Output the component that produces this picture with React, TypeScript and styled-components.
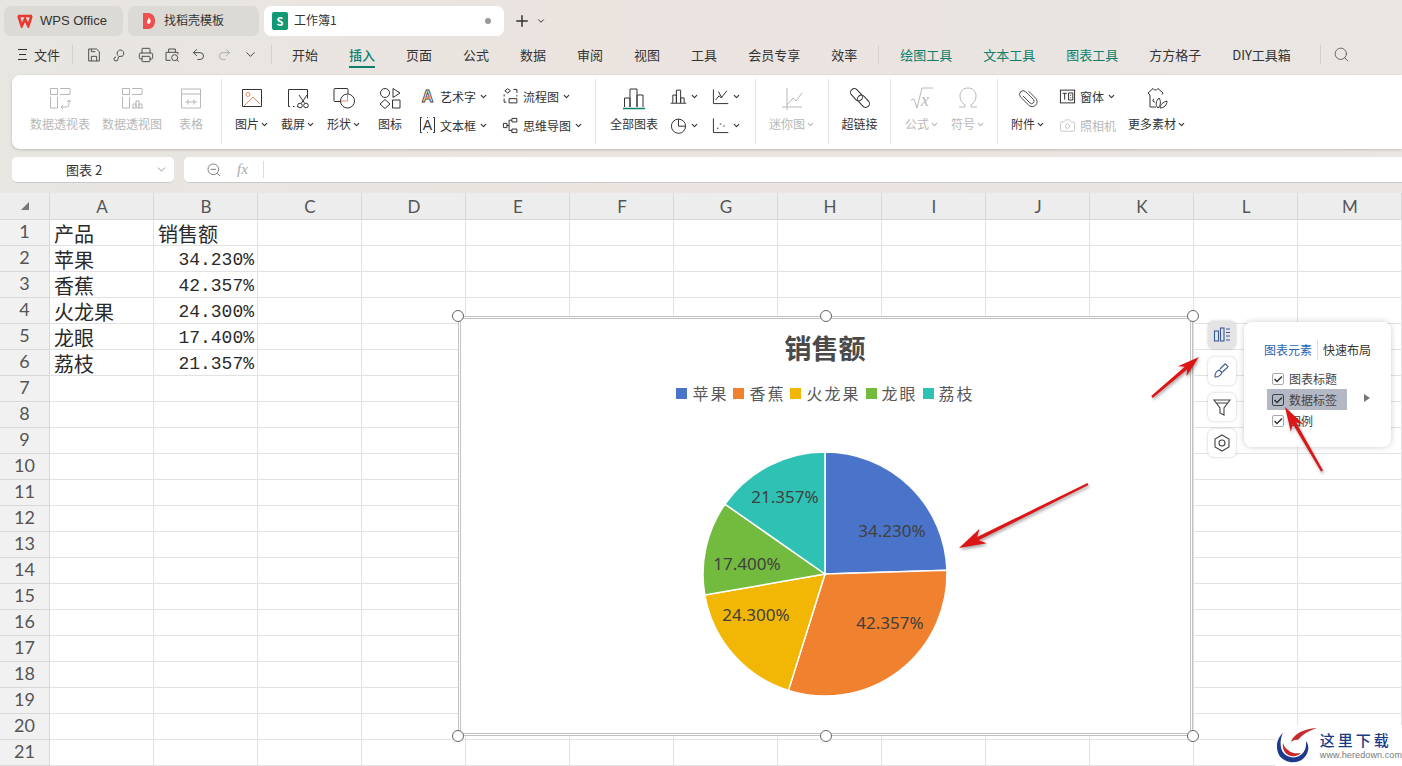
import { FC, ReactNode } from 'react';
import styled, { createGlobalStyle } from 'styled-components';
import { Camera, ChevronDown, Plus, Printer, Redo2, Search, Undo2 } from 'lucide-react';

const UI_FONT = '"Noto Sans CJK SC", "Noto Sans", sans-serif';
const GREEN = '#0e7f6a';
const COLUMNS = ['A', 'B', 'C', 'D', 'E', 'F', 'G', 'H', 'I', 'J', 'K', 'L', 'M'];
const ROW_COUNT = 21;

const GlobalStyle = createGlobalStyle`
  html, body {
    margin: 0;
    padding: 0;
    overflow: hidden;
    background: #f1f1f1;
    font-family: ${UI_FONT};
  }
`;

const SPage = styled.div`
  position: relative;
  width: 1402px;
  height: 766px;
  overflow: hidden;
  display: flex;
  flex-direction: column;
`;
const STop = styled.div`
  background: linear-gradient(90deg, #e8e6e1 0%, #ebe3df 50%, #e9e6e3 100%);
  height: 193px;
  box-sizing: border-box;
`;

/* tabs */
const STabBar = styled.div`
  height: 36px;
  box-sizing: border-box;
  padding: 6px 0 0 4px;
  display: flex;
  gap: 5px;
  align-items: stretch;
`;
const STab = styled.div<{ $width: number; $pad: number; $gap: number; $active?: boolean }>`
  width: ${({ $width }) => $width}px;
  box-sizing: border-box;
  display: flex;
  align-items: center;
  gap: ${({ $gap }) => $gap}px;
  padding: 0 13px 0 ${({ $pad }) => $pad}px;
  border-radius: 7px;
  font-size: 12px;
  color: #333;
  background: ${({ $active }) => ($active ? '#ffffff' : '#dcdad5')};
`;
const STabText = styled.span`
  margin-top: -2px;
  line-height: 16px;
`;
const SOfficeText = styled(STabText)`
  font: 13px 'Liberation Sans', sans-serif;
  margin-top: -1px;
`;
const SSheetBadge = styled.span`
  width: 16px;
  height: 18px;
  border-radius: 2px;
  background: #0f9a75;
  color: #fff;
  font-size: 11px;
  font-weight: 700;
  display: flex;
  align-items: center;
  justify-content: center;
`;
const STabDot = styled.span`
  margin-left: auto;
  width: 6px;
  height: 6px;
  border-radius: 50%;
  background: #9a9a9a;
`;
const SNewTab = styled.div`
  display: flex;
  align-items: center;
  gap: 5px;
  margin-left: 4px;
  color: #333;
`;

/* menu row */
const SMenuRow = styled.div`
  height: 39px;
  box-sizing: border-box;
  padding: 0 0 2px 18px;
  display: flex;
  align-items: center;
  font-size: 13px;
  color: #333;
`;
const SFileButton = styled.div`
  width: 53px;
  display: flex;
  align-items: center;
  gap: 7px;
`;
const SMenuLines = styled.span`
  width: 9px;
  height: 9px;
  border-top: 1px solid #333;
  border-bottom: 1px solid #333;
  position: relative;
  &::after {
    content: '';
    position: absolute;
    left: 1px;
    right: 1px;
    top: 4px;
    height: 1px;
    background: #333;
  }
`;
const SMenuSep = styled.span<{ $margin: number; $right: number }>`
  width: 1px;
  height: 19px;
  background: #d4d1cd;
  margin: 0 ${({ $right }) => $right}px 0 ${({ $margin }) => $margin}px;
`;
const SQuickButton = styled.span<{ $faded?: boolean }>`
  width: 26px;
  display: flex;
  justify-content: center;
  color: ${({ $faded }) => ($faded ? '#aaa' : '#444')};
`;
const SMenuTabs = styled.div`
  display: flex;
  gap: 31px;
`;
const SMenuTab = styled.span<{ $active?: boolean; $tool?: boolean }>`
  position: relative;
  white-space: nowrap;
  line-height: 20px;
  color: ${({ $active, $tool }) => ($active || $tool ? GREEN : '#333')};
  font-weight: ${({ $active }) => ($active ? 500 : 400)};
  ${({ $active }) =>
    $active &&
    `&::after {
      content: '';
      position: absolute;
      left: 0;
      right: 0;
      bottom: -3px;
      height: 2px;
      background: ${GREEN};
    }`}
`;

/* ribbon */
const SRibbon = styled.div`
  height: 74px;
  margin-left: 12px;
  background: #fff;
  border-radius: 8px 0 0 8px;
  box-shadow: 0 1px 3px rgba(0, 0, 0, 0.18);
  display: flex;
  box-sizing: border-box;
  padding: 4px 0 5px;
`;
const SGroup = styled.div<{ $width?: number; $pad?: number; $noSep?: boolean }>`
  ${({ $width }) => $width && `width: ${$width}px;`}
  box-sizing: border-box;
  padding-left: ${({ $pad }) => $pad ?? 0}px;
  display: flex;
  ${({ $noSep }) => !$noSep && 'border-right: 1px solid #e2e2e2;'}
`;
const SBigButton = styled.div<{ $width: number; $disabled?: boolean }>`
  width: ${({ $width }) => $width}px;
  display: flex;
  flex-direction: column;
  align-items: center;
  padding-top: 7px;
  color: ${({ $disabled }) => ($disabled ? '#b8b8b8' : '#333')};
`;
const SIconBox = styled.div`
  height: 24px;
  display: flex;
  align-items: center;
  justify-content: center;
`;
const SBigLabel = styled.div`
  margin-top: 6px;
  line-height: 16px;
  font-size: 12px;
  white-space: nowrap;
  display: flex;
  align-items: center;
  gap: 2px;
`;
const SSmallColumn = styled.div<{ $width: number; $left?: number }>`
  width: ${({ $width }) => $width}px;
  margin-left: ${({ $left }) => $left ?? 0}px;
  padding-top: 4px;
  display: flex;
  flex-direction: column;
  gap: 3px;
`;
const SSmallRow = styled.div<{ $disabled?: boolean }>`
  height: 26px;
  display: flex;
  align-items: center;
  gap: 4px;
  font-size: 12px;
  white-space: nowrap;
  color: ${({ $disabled }) => ($disabled ? '#b8b8b8' : '#333')};
`;
const SCaret = styled(ChevronDown)`
  flex: none;
  width: 9px;
  height: 9px;
  stroke-width: 3;
  margin-left: -1px;
`;

/* formula bar */
const SFormulaRow = styled.div`
  margin-top: 8px;
  height: 26px;
  display: flex;
  gap: 10px;
  padding-left: 12px;
`;
const SNameBox = styled.div`
  width: 162px;
  box-sizing: border-box;
  background: #fff;
  border-radius: 5px;
  border-bottom: 1px solid #c9c9c9;
  display: flex;
  align-items: center;
  font-size: 13px;
  color: #333;
  padding: 0 6px 0 54px;
  justify-content: space-between;
`;
const SFormulaBox = styled.div`
  flex: 1;
  box-sizing: border-box;
  background: #fff;
  border-radius: 5px 0 0 5px;
  border-bottom: 1px solid #c9c9c9;
  display: flex;
  align-items: center;
  padding-left: 22px;
  color: #777;
`;
const SFx = styled.span`
  font-family: 'Liberation Serif', serif;
  font-style: italic;
  font-size: 15px;
  color: #aaa;
  margin-left: 15px;
  padding-right: 15px;
  border-right: 1px solid #ddd;
  line-height: 17px;
`;

/* sheet */
const SSheet = styled.div`
  display: grid;
  grid-template-columns: 50px repeat(13, 104px);
  grid-template-rows: 27px repeat(${ROW_COUNT}, 26px);
  background: #fff;
`;
const SCorner = styled.div`
  background: #ededed;
  border-right: 1px solid #d8d8d8;
  border-bottom: 1px solid #d8d8d8;
  display: flex;
  align-items: center;
  justify-content: center;
  padding-left: 1px;
  &::before {
    content: '';
    border-left: 8px solid transparent;
    border-bottom: 8px solid #777;
  }
`;
const SColHeader = styled.div`
  background: #ededed;
  border-right: 1px solid #d8d8d8;
  border-bottom: 1px solid #d8d8d8;
  display: flex;
  align-items: center;
  justify-content: center;
  padding-left: 1px;
  font: 17px Lato, sans-serif;
  color: #555;
`;
const SRowHeader = styled(SColHeader)`
  font-size: 18px;
  background: #f1f1f1;
  padding: 0 0 3px;
`;
const SCell = styled.div<{ $align?: 'right' }>`
  box-sizing: border-box;
  border-right: 1px solid #e2e2e2;
  border-bottom: 1px solid #e2e2e2;
  font-size: 20px;
  line-height: 24px;
  white-space: nowrap;
  color: #2a2a2a;
  padding: 2px 3px 0 4px;
  text-align: ${({ $align }) => $align ?? 'left'};
  font-family: ${({ $align }) => ($align ? '"Liberation Mono", monospace' : UI_FONT)};
  ${({ $align }) => $align && 'font-size: 18px;'}
`;

/* chart */
const SChart = styled.div`
  position: absolute;
  left: 458px;
  top: 316px;
  width: 735px;
  height: 420px;
  box-sizing: border-box;
  border: 3px double #c2c2c2;
  background: #fff;
  display: flex;
  flex-direction: column;
  align-items: center;
`;
const SChartTitle = styled.div`
  margin: 11px 1px 0 0;
  line-height: 36px;
  font-size: 27px;
  font-weight: 700;
  color: #4a4a4a;
`;
const SLegend = styled.div`
  margin-top: 18px;
  height: 18px;
  display: flex;
  gap: 5px;
  font-size: 16px;
  line-height: 18px;
  letter-spacing: 2px;
  color: #595959;
`;
const SLegendItem = styled.div`
  display: flex;
  align-items: center;
  gap: 5px;
`;
const SLegendSwatch = styled.span<{ $color: string }>`
  width: 11px;
  height: 11px;
  background: ${({ $color }) => $color};
`;
const SPie = styled.svg`
  margin: 42px 1px 0 0;
  display: block;
`;
const SHandleLayer = styled.div`
  position: absolute;
  inset: -3px;
  pointer-events: none;
`;
const SHandle = styled.span<{ $x: number; $y: number }>`
  position: absolute;
  left: ${({ $x }) => $x}%;
  top: ${({ $y }) => $y}%;
  width: 12px;
  height: 12px;
  box-sizing: border-box;
  margin: -6px 0 0 -6px;
  border-radius: 50%;
  background: #fff;
  border: 1px solid #666;
`;

/* chart side tools */
const SSideTools = styled.div`
  position: absolute;
  left: 1208px;
  top: 321px;
  display: flex;
  flex-direction: column;
  gap: 8px;
`;
const SSideButton = styled.div<{ $active?: boolean }>`
  width: 28px;
  height: 28px;
  border-radius: 6px;
  background: ${({ $active }) => ($active ? '#e4e4e4' : '#fff')};
  box-shadow: 0 0 3px rgba(0, 0, 0, 0.22);
  display: flex;
  align-items: center;
  justify-content: center;
`;
const SPopover = styled.div`
  position: absolute;
  left: 1244px;
  top: 322px;
  width: 147px;
  height: 125px;
  box-sizing: border-box;
  padding: 18px 0 0 20px;
  border-radius: 8px;
  background: #fff;
  box-shadow: 0 0 6px rgba(0, 0, 0, 0.2);
  font-size: 12px;
  color: #444;
`;
const SPopTabs = styled.div`
  display: flex;
  line-height: 20px;
  margin-bottom: 8px;
`;
const SPopTab = styled.span<{ $active?: boolean }>`
  color: ${({ $active }) => ($active ? '#2a62b5' : '#333')};
  ${({ $active }) => $active && 'padding-right: 5px; border-right: 1px solid #ddd; margin-right: 5px;'}
`;
const SPopRow = styled.div<{ $active?: boolean }>`
  width: 80px;
  height: 21px;
  margin-left: 3px;
  padding-left: 5px;
  box-sizing: border-box;
  display: flex;
  align-items: center;
  gap: 5px;
  background: ${({ $active }) => ($active ? '#b4b8c4' : 'transparent')};
`;
const SCheck = styled.span<{ $active?: boolean }>`
  width: 12px;
  height: 12px;
  box-sizing: border-box;
  border: 1px solid ${({ $active }) => ($active ? '#3b4252' : '#aaa')};
  border-radius: 2px;
  background: ${({ $active }) => ($active ? 'transparent' : '#fff')};
  display: flex;
  align-items: center;
  justify-content: center;
`;
const SPopArrow = styled.span`
  position: absolute;
  left: 120px;
  top: 72px;
  border-left: 6px solid #777;
  border-top: 4px solid transparent;
  border-bottom: 4px solid transparent;
`;

/* annotations */
const SArrowLayer = styled.svg`
  position: absolute;
  left: 0;
  top: 0;
  pointer-events: none;
  filter: drop-shadow(1px 2px 1.5px rgba(0, 0, 0, 0.35));
`;
const SWatermark = styled.div`
  position: absolute;
  left: 1275px;
  top: 725px;
  width: 127px;
  height: 41px;
  background: #fff;
  display: flex;
  gap: 3px;
`;
const SWatermarkText = styled.div`
  display: flex;
  flex-direction: column;
  padding-top: 5px;
`;
const SWatermarkTitle = styled.div`
  font-size: 15px;
  line-height: 20px;
  font-weight: 500;
  letter-spacing: 3px;
  color: #1c3a86;
`;
const SWatermarkUrl = styled.div`
  font: 9px 'Liberation Sans', sans-serif;
  color: #777;
  letter-spacing: 0.1px;
`;

/* drawings */
const Ico: FC<{ size?: number; children: ReactNode; color?: string }> = ({ size = 24, children, color }) => (
  <svg
    width={size}
    height={size}
    viewBox="0 0 24 24"
    fill="none"
    stroke={color ?? 'currentColor'}
    strokeWidth={size > 20 ? 1 : 1.4}
  >
    {children}
  </svg>
);
const ORANGE = '#e58a5f';

const icons: Record<string, ReactNode> = {
  pivot: (
    <>
      <rect x="2.500" y="2.500" width="7" height="6" />
      <path d="M12 2.500h10v6H12M2.500 11v11h7V11M13 21h5a3 3 0 0 0 3-3v-4M19 16l2-2 2 2M15 19l-2 2 2 2" />
    </>
  ),
  pivotChart: (
    <>
      <rect x="2.500" y="2.500" width="7" height="6" />
      <path d="M12 2.500h10v6H12M2.500 11v11h7V11M12 22h11M13 22v-4h3v4M16 22v-7h3v7M19 22v-4h3v4" />
    </>
  ),
  table: <path d="M2.500 3h19v19h-19zM2.500 8h19M6 16h6M9 13.500v5M12 16h6M15 13.500v5" />,
  picture: (
    <>
      <path d="M2.500 3.500h19v17h-19z" stroke="#333" />
      <circle cx="8" cy="8.500" r="2" stroke={ORANGE} />
      <path d="M4 20l9-9 7 7" stroke={ORANGE} />
    </>
  ),
  screenshot: (
    <>
      <path d="M4 20.500H2.500v-17h19v9M7 20.500h1.500M11 20.500h1" stroke="#333" />
      <path d="M13 9l5.500 8M21 9l-5.500 8" stroke="#333" />
      <circle cx="14" cy="19.500" r="2.300" stroke="#333" />
      <circle cx="20" cy="19.500" r="2.300" stroke="#333" />
    </>
  ),
  shape: (
    <>
      <path d="M8.500 15.500H3a1 1 0 0 1-1-1V3.500a1 1 0 0 1 1-1h12a1 1 0 0 1 1 1V8" stroke="#333" />
      <circle cx="15.500" cy="15" r="7" stroke="#333" />
      <path d="M9 15h6.500V8.500" stroke={ORANGE} />
    </>
  ),
  iconSet: (
    <>
      <circle cx="7" cy="7" r="4.500" />
      <path d="M15 2.500l7 4.500-7 4.500zM7 13.500l5 4.500-5 4.500L2 18zM14.500 14h7.500v8h-7.500z" />
    </>
  ),
  allCharts: (
    <>
      <path d="M2.500 21v-9h5.500v9M8 21V3h7v18M15 21v-12h6v12" stroke="#333" />
      <path d="M1 22.500h22" stroke={GREEN} strokeWidth="1.500" />
    </>
  ),
  flow: <path d="M8 1l4 3-4 3-4-3zM3 9v3M3 15v5h3M16 2h5v5M21 10v2M10 15h11v6H10z" />,
  mindmap: <path d="M2 9h5v6H2zM14 2h7v5h-7zM14 17h7v5h-7zM7 12h3V4.500h4M10 12v7h4" />,
  bar: <path d="M4 21V10h5v11M9 21V3h6v18M15 21v-7h5v7M1 21.500h22" />,
  line: <path d="M2 2v20h21M5 17l5-6 3 3 8-10M9 5l5 9" />,
  pie: (
    <>
      <circle cx="12" cy="13" r="10" />
      <path d="M12 3v10h10" />
    </>
  ),
  scatter: (
    <>
      <path d="M2 2v20h21" />
      <path d="M8 15v1.500M12 9v1.500M17 12v1.500" strokeWidth="2" />
    </>
  ),
  spark: <path d="M2 21h20M7 2v22M7 19l6-7 3 3 6-8" />,
  sqrt: (
    <>
      <path d="M1 14l3-1 3 9 5-20h11" />
      <text x="11" y="20" fontSize="18" fontStyle="italic" fontFamily="Liberation Serif" stroke="none" fill="currentColor">
        x
      </text>
    </>
  ),
  omega: <path d="M3 21h6v-2c-3-2-5-5-5-9 0-5 3.500-8 8-8s8 3 8 8c0 4-2 7-5 9v2h6" />,
  link: (
    <>
      <rect x="1.500" y="5" width="14" height="7.500" rx="3.750" transform="rotate(48 8.500 8.750)" />
      <rect x="8.500" y="11.500" width="14" height="7.500" rx="3.750" transform="rotate(48 15.500 15.250)" />
    </>
  ),
  clip: (
    <g transform="rotate(-45 12 12) translate(2.500 2) scale(.82)">
      <path d="M9 6v12a3 3 0 0 0 6 0V5a4.500 4.500 0 0 0-9 0v14a6 6 0 0 0 12 0V7" />
    </g>
  ),
  form: (
    <>
      <rect x="2" y="3" width="20" height="18" />
      <path d="M5 7.500h6M8 7.500v9M13.500 7h6v10h-6zM16.500 9.500v1.500M16.500 13v1.500" />
    </>
  ),
  material: (
    <>
      <path d="M11 21H5V9L3 7l5-4.500c1 2 4 2 5 0L18 7l-1 1.500" />
      <path d="M13 22c-3-3-2-7 1-10 2 3 2 7-1 10zM15 22c0-3 3-6 7-7 0 4-3 7-7 7zM9 13a1.500 1.500 0 0 0 1 3" />
    </>
  ),
};

const ArtLetter: FC = () => (
  <svg width="17" height="18" viewBox="0 0 17 18">
    <text x="8.500" y="15" textAnchor="middle" fontSize="16" fontWeight="700" fontFamily="Liberation Sans" fill="#fff" stroke="#444" strokeWidth=".9">
      A
    </text>
    <path d="M5.500 11h6" stroke={ORANGE} strokeWidth="2" />
  </svg>
);
const BoxLetter: FC = () => (
  <svg width="17" height="18" viewBox="0 0 17 18">
    <path d="M1.500 1v16M15.500 1v16" stroke="#333" fill="none" />
    <path d="M1 1.500h2M14 1.500h2M1 16.500h2M14 16.500h2M8 1.500h1M8 16.500h1" stroke="#2f4a8a" />
    <text x="8.500" y="14" textAnchor="middle" fontSize="14" fontFamily="Liberation Sans" fill="#333">
      A
    </text>
  </svg>
);
const SmallIcon: FC<{ name: string }> = ({ name }) => <Ico size={17}>{icons[name]}</Ico>;
const BigIcon: FC<{ name: string }> = ({ name }) => <Ico>{icons[name]}</Ico>;

const CheckMark: FC = () => (
  <svg width="10" height="10" viewBox="0 0 10 10" fill="none" stroke="#333" strokeWidth="1.500">
    <path d="M1.500 5l2.500 2.500 5-5" />
  </svg>
);

const BigButton: FC<{ width: number; icon: string; label: string; caret?: boolean; disabled?: boolean }> = ({
  width,
  icon,
  label,
  caret,
  disabled,
}) => (
  <SBigButton $width={width} $disabled={disabled}>
    <SIconBox>
      <BigIcon name={icon} />
    </SIconBox>
    <SBigLabel>
      {label}
      {caret && <SCaret />}
    </SBigLabel>
  </SBigButton>
);

const SmallRow: FC<{ icon: ReactNode; label?: string; caret?: boolean; disabled?: boolean }> = ({
  icon,
  label,
  caret = true,
  disabled,
}) => (
  <SSmallRow $disabled={disabled}>
    {icon}
    {label}
    {caret && <SCaret />}
  </SSmallRow>
);

const PIE_CENTER = 130;
const PIE_RADIUS = 122;
const SLICES = [
  { name: '苹果', value: 34.23, color: '#4a74c9', labelX: 67, labelY: -43 },
  { name: '香蕉', value: 42.357, color: '#f0812e', labelX: 65, labelY: 49 },
  { name: '火龙果', value: 24.3, color: '#f2b705', labelX: -69, labelY: 41 },
  { name: '龙眼', value: 17.4, color: '#72bb3f', labelX: -78, labelY: -10 },
  { name: '荔枝', value: 21.357, color: '#2fc2b4', labelX: -40, labelY: -77 },
];
const TOTAL = SLICES.reduce((sum, s) => sum + s.value, 0);

const slicePath = (start: number, end: number) => {
  const point = (a: number) =>
    `${PIE_CENTER + PIE_RADIUS * Math.sin(a)} ${PIE_CENTER - PIE_RADIUS * Math.cos(a)}`;
  const large = end - start > Math.PI ? 1 : 0;
  return `M${PIE_CENTER} ${PIE_CENTER}L${point(start)}A${PIE_RADIUS} ${PIE_RADIUS} 0 ${large} 1 ${point(end)}Z`;
};

const PieChart: FC = () => {
  let angle = 0;
  return (
    <SPie width="260" height="260" viewBox="0 0 260 260">
      {SLICES.map((s) => {
        const start = angle;
        angle += (s.value / TOTAL) * Math.PI * 2;
        return <path key={s.name} d={slicePath(start, angle)} fill={s.color} stroke="#fff" strokeWidth="1.500" />;
      })}
      {SLICES.map((s) => (
        <text
          key={s.name}
          x={PIE_CENTER + s.labelX}
          y={PIE_CENTER + s.labelY + 6}
          textAnchor="middle"
          fontSize="17"
          fontFamily='"Noto Sans", sans-serif'
          fill="#404040"
        >
          {s.value.toFixed(3)}%
        </text>
      ))}
    </SPie>
  );
};

const CELLS: Record<string, { text: string; right?: boolean }> = {
  A1: { text: '产品' },
  B1: { text: '销售额' },
  A2: { text: '苹果' },
  B2: { text: '34.230%', right: true },
  A3: { text: '香蕉' },
  B3: { text: '42.357%', right: true },
  A4: { text: '火龙果' },
  B4: { text: '24.300%', right: true },
  A5: { text: '龙眼' },
  B5: { text: '17.400%', right: true },
  A6: { text: '荔枝' },
  B6: { text: '21.357%', right: true },
};

const Sheet: FC = () => (
  <SSheet>
    <SCorner />
    {COLUMNS.map((c) => (
      <SColHeader key={c}>{c}</SColHeader>
    ))}
    {Array.from({ length: ROW_COUNT }, (_, i) => i + 1).flatMap((row) => [
      <SRowHeader key={`r${row}`}>{row}</SRowHeader>,
      ...COLUMNS.map((c) => {
        const cell = CELLS[`${c}${row}`];
        return (
          <SCell key={`${c}${row}`} $align={cell?.right ? 'right' : undefined}>
            {cell?.text}
          </SCell>
        );
      }),
    ])}
  </SSheet>
);

const Ribbon: FC = () => (
  <SRibbon>
    <SGroup $width={210} $pad={12}>
      <BigButton width={72} disabled label="数据透视表" icon="pivot" />
      <BigButton width={72} disabled label="数据透视图" icon="pivotChart" />
      <BigButton width={46} disabled label="表格" icon="table" />
    </SGroup>
    <SGroup $width={374} $pad={7}>
      <BigButton width={46} caret label="图片" icon="picture" />
      <BigButton width={46} caret label="截屏" icon="screenshot" />
      <BigButton width={46} caret label="形状" icon="shape" />
      <BigButton width={46} label="图标" icon="iconSet" />
      <SSmallColumn $width={83} $left={6}>
        <SmallRow icon={<ArtLetter />} label="艺术字" />
        <SmallRow icon={<BoxLetter />} label="文本框" />
      </SSmallColumn>
      <SSmallColumn $width={90}>
        <SmallRow icon={<SmallIcon name="flow" />} label="流程图" />
        <SmallRow icon={<SmallIcon name="mindmap" />} label="思维导图" />
      </SSmallColumn>
    </SGroup>
    <SGroup $width={160} $pad={8}>
      <BigButton width={60} label="全部图表" icon="allCharts" />
      <SSmallColumn $width={42} $left={6}>
        <SmallRow icon={<SmallIcon name="bar" />} />
        <SmallRow icon={<SmallIcon name="pie" />} />
      </SSmallColumn>
      <SSmallColumn $width={42}>
        <SmallRow icon={<SmallIcon name="line" />} />
        <SmallRow icon={<SmallIcon name="scatter" />} />
      </SSmallColumn>
    </SGroup>
    <SGroup $width={73}>
      <BigButton width={72} disabled caret label="迷你图" icon="spark" />
    </SGroup>
    <SGroup $width={62}>
      <BigButton width={61} label="超链接" icon="link" />
    </SGroup>
    <SGroup $width={107} $pad={8}>
      <BigButton width={46} disabled caret label="公式" icon="sqrt" />
      <BigButton width={46} disabled caret label="符号" icon="omega" />
    </SGroup>
    <SGroup $pad={8} $noSep>
      <BigButton width={44} caret label="附件" icon="clip" />
      <SSmallColumn $width={63} $left={9}>
        <SmallRow icon={<SmallIcon name="form" />} label="窗体" />
        <SmallRow icon={<Camera size={17} strokeWidth={1.1} />} label="照相机" caret={false} disabled />
      </SSmallColumn>
      <BigButton width={70} caret label="更多素材" icon="material" />
    </SGroup>
  </SRibbon>
);

const MenuRow: FC = () => (
  <SMenuRow>
    <SFileButton>
      <SMenuLines />
      文件
    </SFileButton>
    <SMenuSep $margin={1} $right={8} />
    <SQuickButton>
      <Ico size={16}>
        <path d="M4 3h12l4 4v14H4zM8 21v-7h8v7M8 3v4h6" />
      </Ico>
    </SQuickButton>
    <SQuickButton>
      <Ico size={16}>
        <path d="M9 13a5 5 0 1 1 6 1h-3a3 3 0 0 0-3 3v1a3 3 0 0 1-6 0 3 3 0 0 1 3-3" />
      </Ico>
    </SQuickButton>
    <SQuickButton>
      <Printer size={16} strokeWidth={1.4} />
    </SQuickButton>
    <SQuickButton>
      <Ico size={16}>
        <path d="M7 8V3h10v5M10 20H3V8h18v3" />
        <circle cx="16" cy="16" r="4.500" />
        <path d="M19.500 19.500L22 22" />
      </Ico>
    </SQuickButton>
    <SQuickButton>
      <Undo2 size={15} strokeWidth={1.5} />
    </SQuickButton>
    <SQuickButton $faded>
      <Redo2 size={15} strokeWidth={1.5} />
    </SQuickButton>
    <SQuickButton>
      <ChevronDown size={15} strokeWidth={1.6} />
    </SQuickButton>
    <SMenuSep $margin={8} $right={20} />
    <SMenuTabs>
      <SMenuTab>开始</SMenuTab>
      <SMenuTab $active>插入</SMenuTab>
      <SMenuTab>页面</SMenuTab>
      <SMenuTab>公式</SMenuTab>
      <SMenuTab>数据</SMenuTab>
      <SMenuTab>审阅</SMenuTab>
      <SMenuTab>视图</SMenuTab>
      <SMenuTab>工具</SMenuTab>
      <SMenuTab>会员专享</SMenuTab>
      <SMenuTab>效率</SMenuTab>
    </SMenuTabs>
    <SMenuSep $margin={21} $right={21} />
    <SMenuTabs>
      <SMenuTab $tool>绘图工具</SMenuTab>
      <SMenuTab $tool>文本工具</SMenuTab>
      <SMenuTab $tool>图表工具</SMenuTab>
      <SMenuTab>方方格子</SMenuTab>
      <SMenuTab>DIY工具箱</SMenuTab>
    </SMenuTabs>
    <SMenuSep $margin={29} $right={12} />
    <Search size={17} strokeWidth={1.2} color="#555" />
  </SMenuRow>
);

const TabBar: FC = () => (
  <STabBar>
    <STab $width={119} $pad={13} $gap={7}>
      <svg width="16" height="14" viewBox="0 0 16 14" fill="none" stroke="#e8392e" strokeWidth="2.600">
        <path d="M1 2h14M1.500 2l3.200 10L8 5l3.300 7 3.200-10" />
      </svg>
      <SOfficeText>WPS Office</SOfficeText>
    </STab>
    <STab $width={131} $pad={14} $gap={8}>
      <svg width="14" height="18" viewBox="0 0 14 18">
        <path d="M1 1h5c5 0 7 4 7 8s-2 8-7 8H1z" fill="#ee4f4f" />
        <path d="M7 5c0 2 3 3 1 6-1 1.500-3 1-3-1 0-1 1-2 2-5z" fill="#fff" />
      </svg>
      <STabText>找稻壳模板</STabText>
    </STab>
    <STab $width={240} $pad={8} $gap={6} $active>
      <SSheetBadge>S</SSheetBadge>
      <STabText>工作簿1</STabText>
      <STabDot />
    </STab>
    <SNewTab>
      <Plus size={18} strokeWidth={2} />
      <ChevronDown size={10} strokeWidth={2.4} />
    </SNewTab>
  </STabBar>
);

const ChartObject: FC = () => (
  <SChart>
    <SChartTitle>销售额</SChartTitle>
    <SLegend>
      {SLICES.map((s) => (
        <SLegendItem key={s.name}>
          <SLegendSwatch $color={s.color} />
          {s.name}
        </SLegendItem>
      ))}
    </SLegend>
    <PieChart />
    <SHandleLayer>
      <SHandle $x={0} $y={0} />
      <SHandle $x={50} $y={0} />
      <SHandle $x={100} $y={0} />
      <SHandle $x={0} $y={100} />
      <SHandle $x={50} $y={100} />
      <SHandle $x={100} $y={100} />
    </SHandleLayer>
  </SChart>
);

const SideTools: FC = () => (
  <SSideTools>
    <SSideButton $active>
      <svg width="18" height="18" viewBox="0 0 18 18" fill="none" stroke="#3d5a94" strokeWidth="1.100">
        <rect x="1.500" y="5" width="4" height="10" />
        <rect x="7.500" y="2" width="3.500" height="13" />
        <path d="M13 3h4M13 6.500h4M13 10h4M13 14h4" />
      </svg>
    </SSideButton>
    <SSideButton>
      <svg width="18" height="18" viewBox="0 0 18 18" fill="none" stroke="#3d5a94" strokeWidth="1.100">
        <path d="M2 15c-.5-3 1.500-6 4-7l3 2.500C8 13 5 15.500 2 15zM7 7l5-5 1 .5 2 2-.5 1-5 4.500" />
      </svg>
    </SSideButton>
    <SSideButton>
      <svg width="20" height="20" viewBox="0 0 20 20" fill="none" stroke="#444" strokeWidth="1.100">
        <path d="M2 3h16l-6 8v7l-4-2v-5zM4 6h12" />
      </svg>
    </SSideButton>
    <SSideButton>
      <svg width="20" height="20" viewBox="0 0 20 20" fill="none" stroke="#444" strokeWidth="1.100">
        <path d="M10 2l7 4v8l-7 4-7-4V6z" />
        <circle cx="10" cy="10" r="3" />
      </svg>
    </SSideButton>
  </SSideTools>
);

const Popover: FC = () => (
  <SPopover>
    <SPopTabs>
      <SPopTab $active>图表元素</SPopTab>
      <SPopTab>快速布局</SPopTab>
    </SPopTabs>
    <SPopRow>
      <SCheck>
        <CheckMark />
      </SCheck>
      图表标题
    </SPopRow>
    <SPopRow $active>
      <SCheck $active>
        <CheckMark />
      </SCheck>
      数据标签
    </SPopRow>
    <SPopRow>
      <SCheck>
        <CheckMark />
      </SCheck>
      图例
    </SPopRow>
    <SPopArrow />
  </SPopover>
);

// thin shaft, notched head
const arrowPath = (x1: number, y1: number, x2: number, y2: number, size: number) => {
  const len = Math.hypot(x2 - x1, y2 - y1);
  const ux = (x2 - x1) / len;
  const uy = (y2 - y1) / len;
  const nx = -uy;
  const ny = ux;
  const at = (along: number, side: number) =>
    `${x2 - ux * along + nx * side} ${y2 - uy * along + ny * side}`;
  return [
    `M${at(len, 1.2)}`,
    `L${at(size * 0.78, 1.8)}`,
    `L${at(size, size * 0.3)}`,
    `L${x2} ${y2}`,
    `L${at(size, -size * 0.3)}`,
    `L${at(size * 0.78, -1.8)}`,
    `L${at(len, -1.2)}Z`,
  ].join('');
};

const Arrows: FC = () => (
  <SArrowLayer width="1402" height="766" viewBox="0 0 1402 766" fill="#dc1616">
    <path d={arrowPath(1152, 397, 1199, 357, 22)} />
    <path d={arrowPath(1322, 471, 1285, 407, 24)} />
    <path d={arrowPath(1088, 484, 959, 548, 27)} />
  </SArrowLayer>
);

const Watermark: FC = () => (
  <SWatermark>
    <svg width="42" height="41" viewBox="0 0 42 41">
      <path d="M8 8C2 13 0 22 4 30c5 8 18 10 25 3 5-5 6-12 2-17 1 7-2 14-9 16-8 2-15-3-16-10-1-5 0-10 2-14z" fill="#1d3a8c" />
      <path d="M8 18c-1 6 2 12 8 13 4 1 8-1 10-3-5 1-10 0-13-3-3-2-4-4-5-7z" fill="#c8282e" />
      <path d="M16 17c3-8 12-13 26-14-9 3-15 7-19 12-2-1-5 0-7 2z" fill="#c8282e" />
    </svg>
    <SWatermarkText>
      <SWatermarkTitle>这里下载</SWatermarkTitle>
      <SWatermarkUrl>www.heredown.com</SWatermarkUrl>
    </SWatermarkText>
  </SWatermark>
);

const App: FC = () => (
  <SPage>
    <GlobalStyle />
    <STop>
      <TabBar />
      <MenuRow />
      <Ribbon />
      <SFormulaRow>
        <SNameBox>
          图表 2
          <ChevronDown size={13} strokeWidth={1.4} color="#777" />
        </SNameBox>
        <SFormulaBox>
          <Ico size={16}>
            <circle cx="11" cy="11" r="8" />
            <path d="M7 11h8M17 17l4 4" />
          </Ico>
          <SFx>fx</SFx>
        </SFormulaBox>
      </SFormulaRow>
    </STop>
    <Sheet />
    <ChartObject />
    <SideTools />
    <Popover />
    <Arrows />
    <Watermark />
  </SPage>
);

export default App;
